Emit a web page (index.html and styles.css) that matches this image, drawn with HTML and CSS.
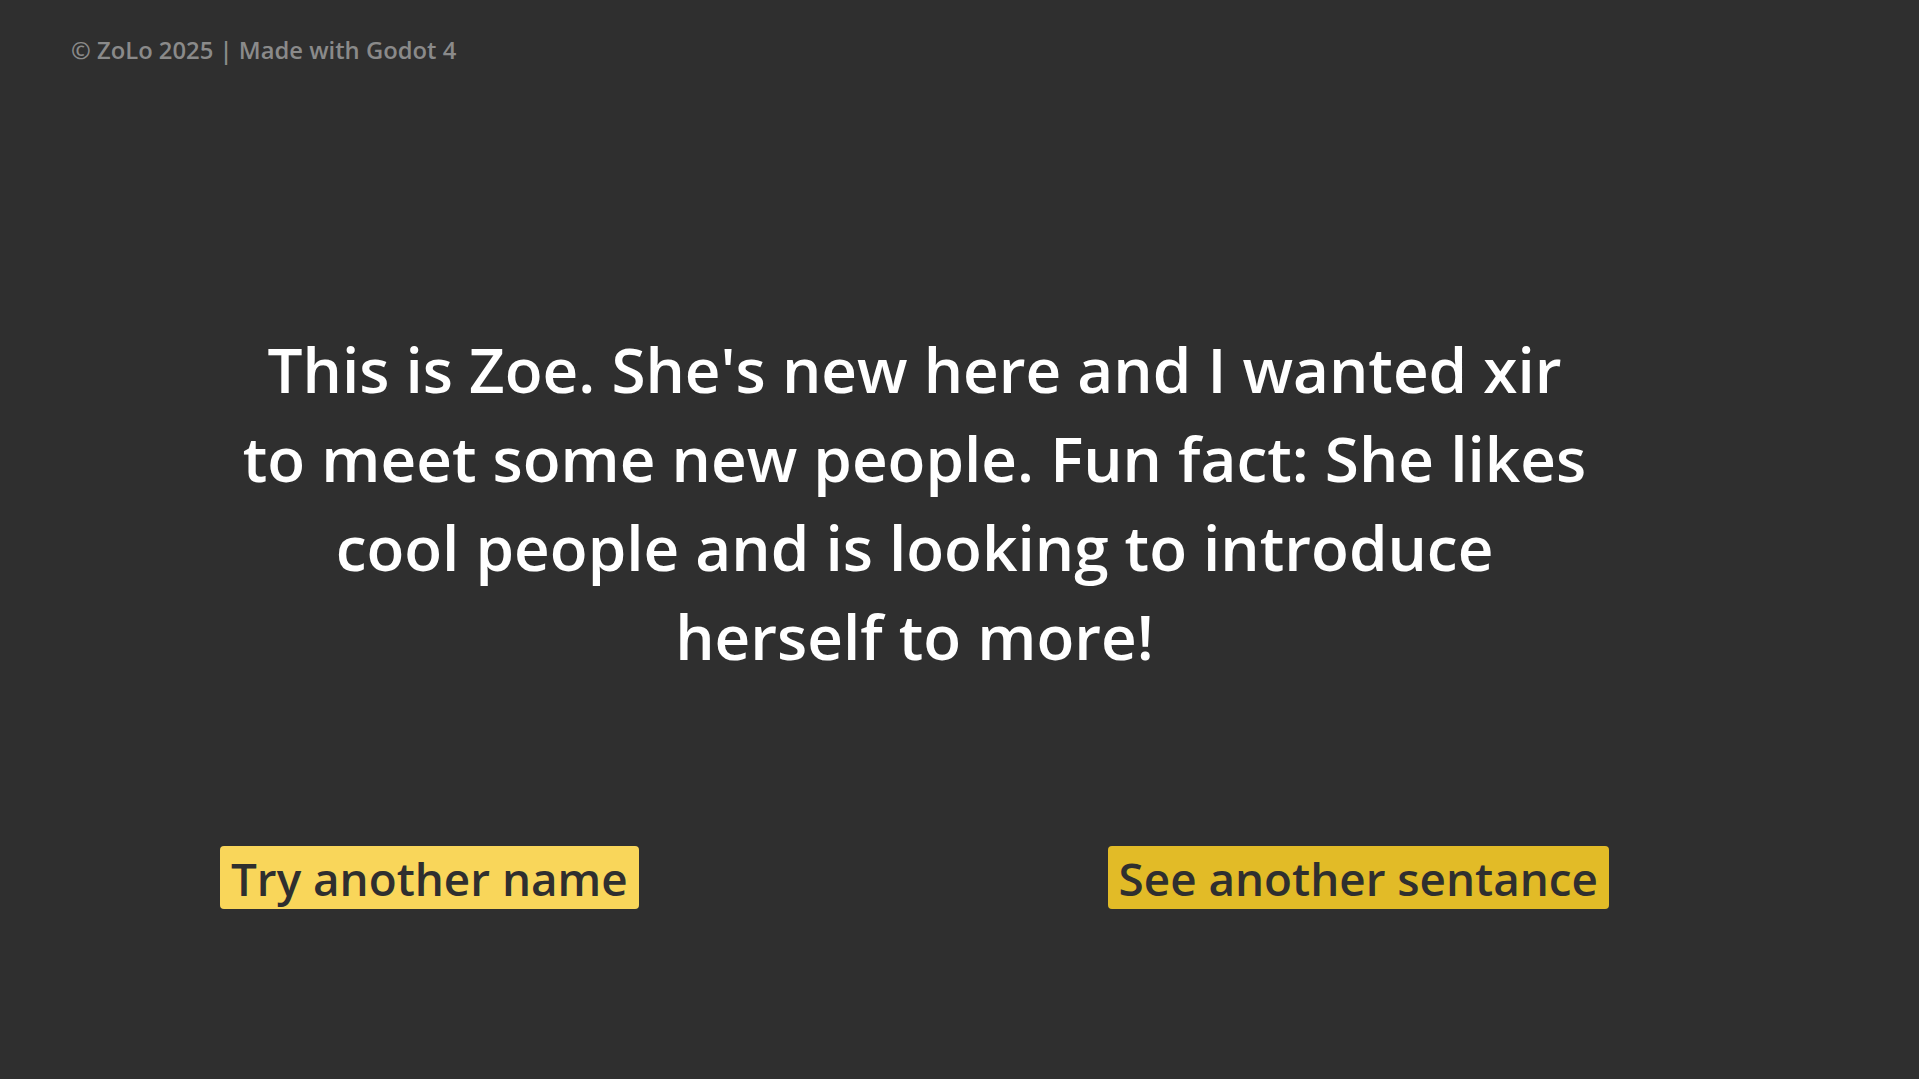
FILE: index.html
```html
<!DOCTYPE html>
<html lang="en">
<head>
<meta charset="utf-8">
<title>ZoLo</title>
<link rel="stylesheet" href="styles.css">
</head>
<body>
<div class="screen">
  <header class="credits">© ZoLo 2025 | Made with Godot 4</header>
  <main class="content">
    <p class="sentence">This is Zoe. She's new here and I wanted xir to meet some new people. Fun fact: She likes cool people and is looking to introduce herself to more!</p>
    <div class="actions">
      <button class="btn btn-name">Try another name</button>
      <button class="btn btn-sentence">See another sentance</button>
    </div>
  </main>
</div>
</body>
</html>
```
FILE: styles.css
```css
html, body {
  margin: 0;
  padding: 0;
  background: #2f2f2f;
}
.screen {
  width: 1919px;
  height: 1079px;
  box-sizing: border-box;
  padding: 35px 0 0 71px;
  font-family: "Open Sans", "Noto Sans", sans-serif;
  font-weight: 600;
  overflow: hidden;
}
.credits {
  font-size: 23.8px;
  line-height: 30px;
  color: #8a8a8a;
}
.content {
  margin-left: 149px;
  width: 1389px;
  padding-top: 260px;
}
.sentence {
  margin: 0 auto;
  width: 1360px;
  text-align: center;
  font-size: 62px;
  line-height: 89px;
  color: #ffffff;
}
.actions {
  display: flex;
  justify-content: space-between;
  margin-top: 165px;
}
.btn {
  font-family: inherit;
  font-weight: 600;
  font-size: 45.8px;
  line-height: 60px;
  padding: 2px 11px 1px;
  border: none;
  border-radius: 4px;
  color: #2f2f2f;
  cursor: pointer;
}
.btn-name {
  background: #f9d65a;
}
.btn-sentence {
  background: #e2bb27;
}
```
